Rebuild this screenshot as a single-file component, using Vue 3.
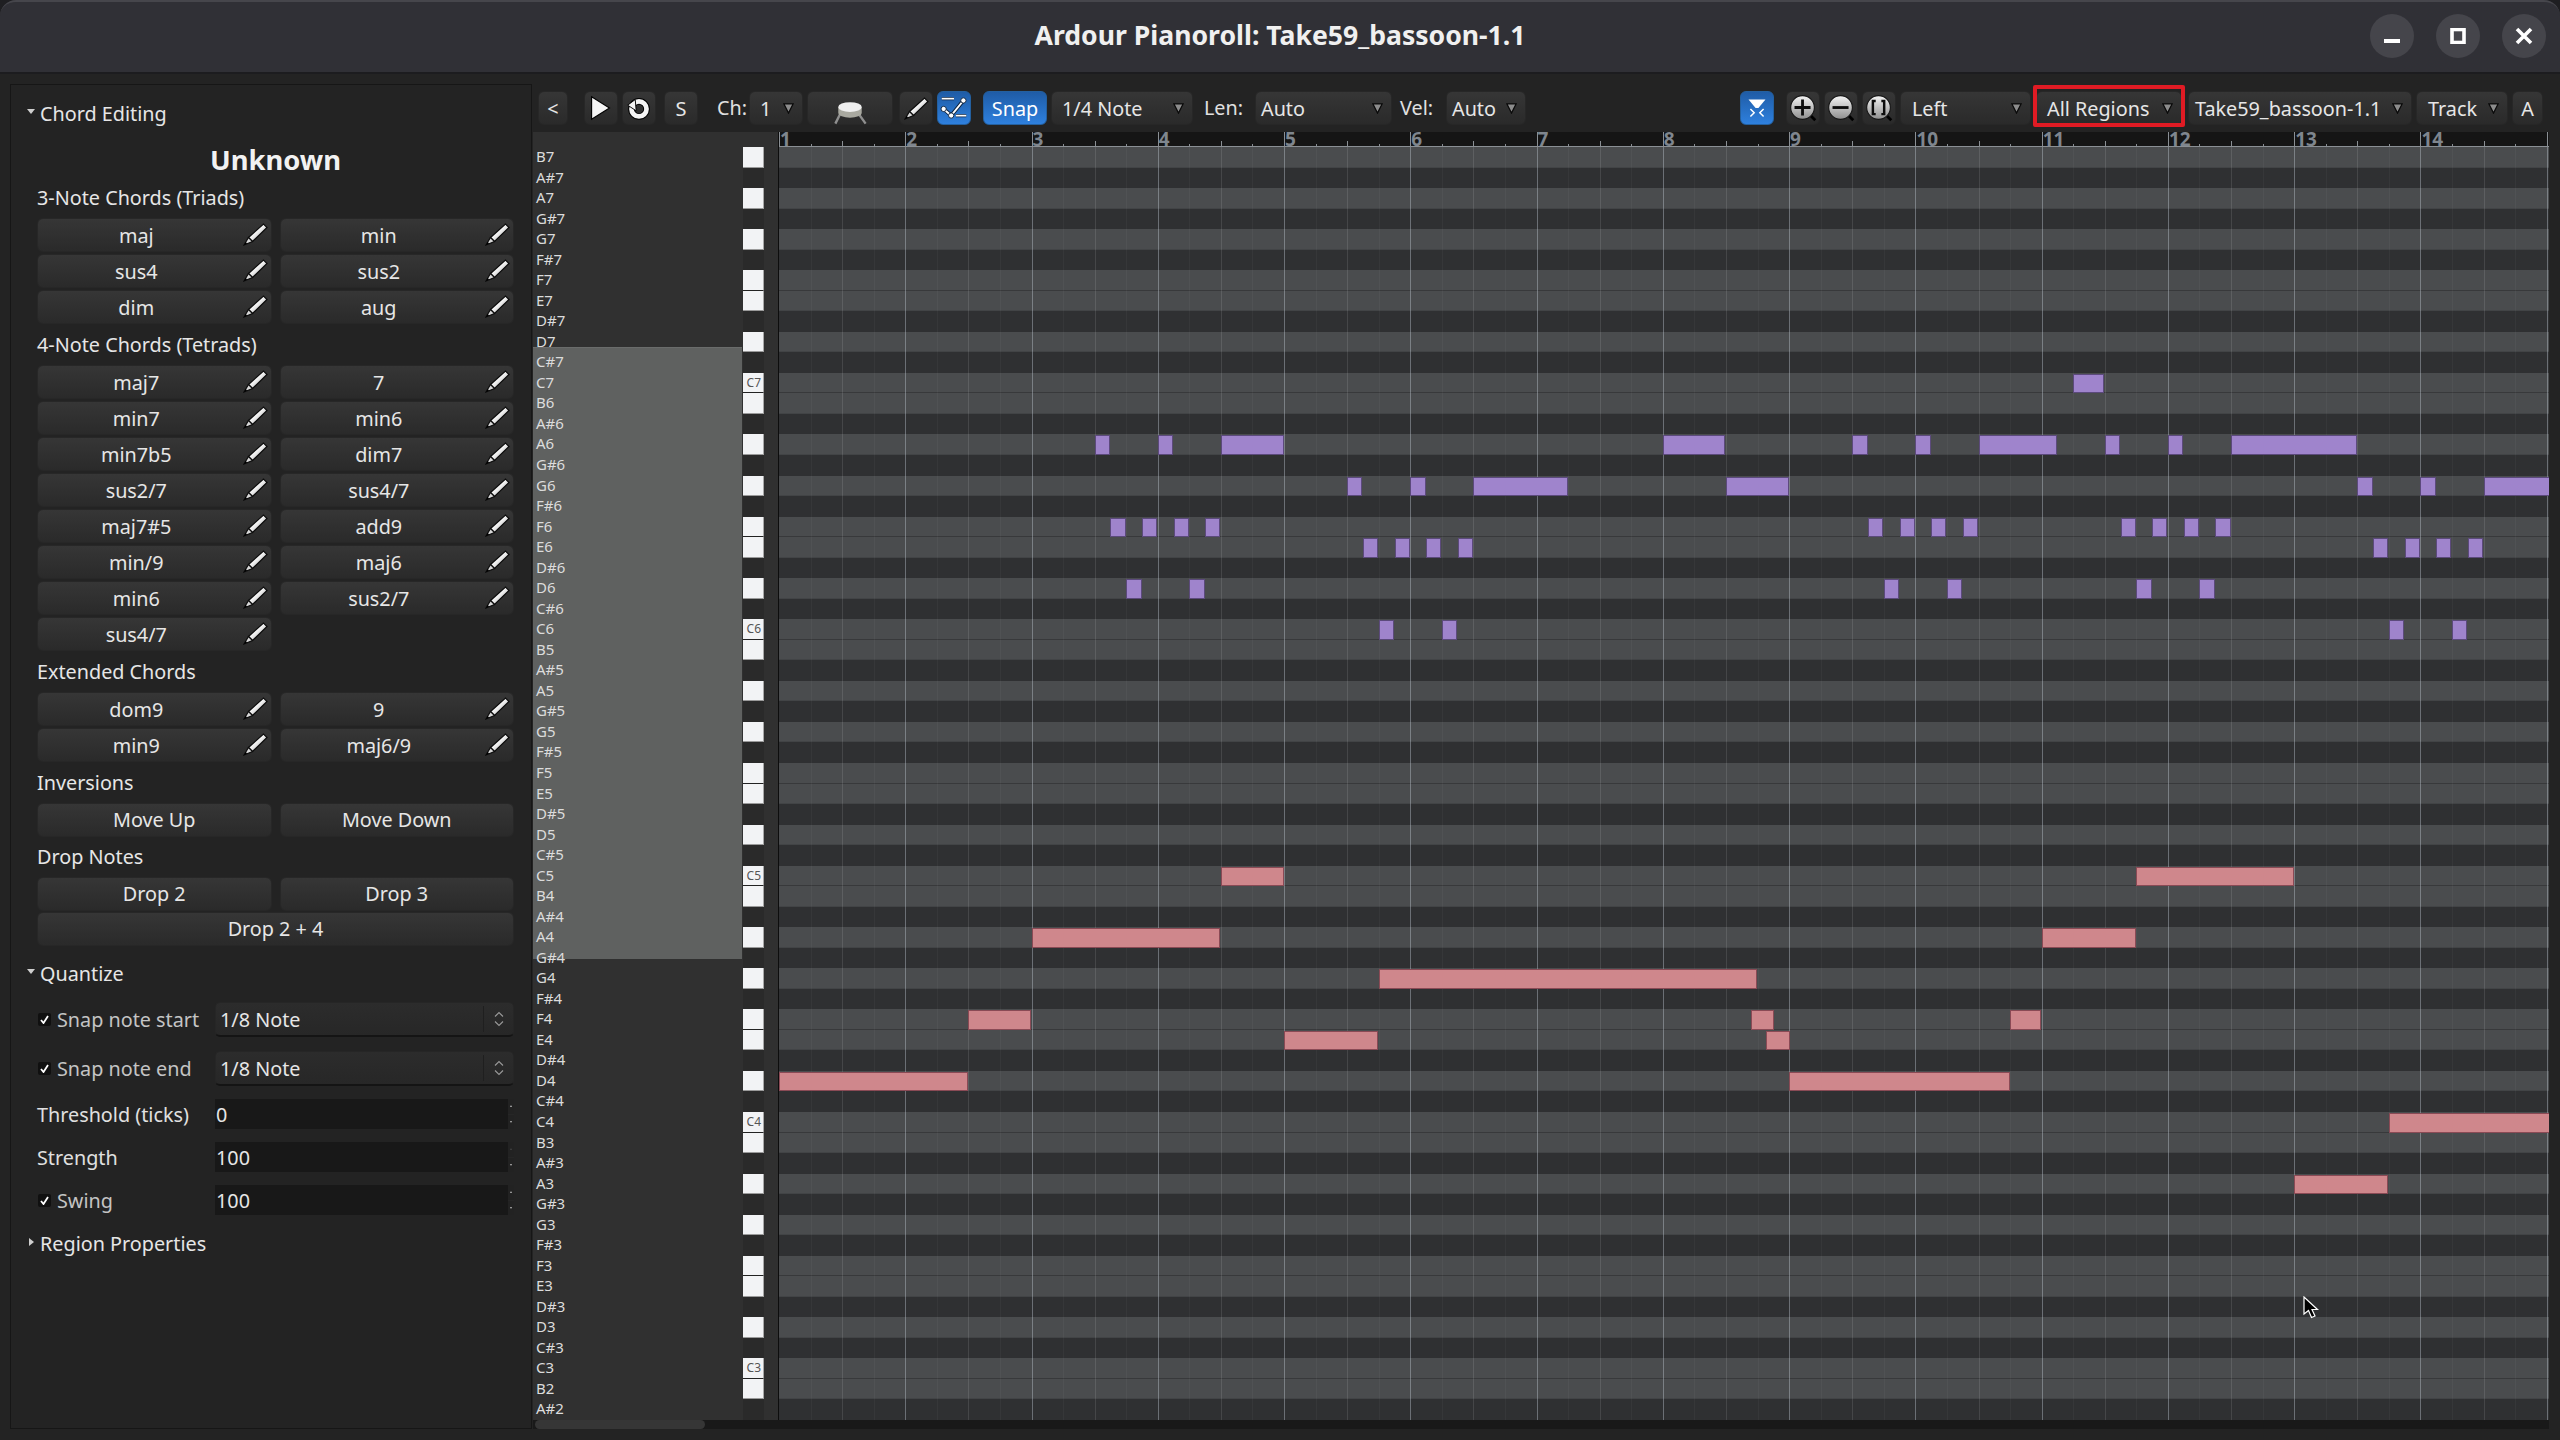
<script setup>
const triads = ['maj', 'min', 'sus4', 'sus2', 'dim', 'aug']
const tetrads = ['maj7', '7', 'min7', 'min6', 'min7b5', 'dim7', 'sus2/7', 'sus4/7', 'maj7#5', 'add9', 'min/9', 'maj6', 'min6', 'sus2/7', 'sus4/7']
const extended = ['dom9', '9', 'min9', 'maj6/9']

const names = ['C', 'C#', 'D', 'D#', 'E', 'F', 'F#', 'G', 'G#', 'A', 'A#', 'B']
const TOP = 107
const ROW = 1273 / 62
const STEP = 15.783

const rows = []
for (let m = TOP; m >= 46; m--) {
  const n = names[m % 12]
  rows.push({
    m,
    name: n + (Math.floor(m / 12) - 1),
    black: n.length > 1,
    pair: n === 'F' || n === 'C',
    isC: n === 'C'
  })
}

const beats = []
for (let i = 1; i < 57; i++) {
  beats.push({ i, kind: i % 4 === 0 ? 'bar' : i % 2 === 0 ? 'half' : 'beat' })
}
const bars = []
for (let b = 0; b < 14; b++) bars.push(b)

// [midi, start in 16ths, length in 16ths]
const purple = [
  [96, 82, 2],
  [93, 20, 1], [93, 24, 1], [93, 28, 4], [93, 56, 4], [93, 68, 1], [93, 72, 1], [93, 76, 5], [93, 84, 1], [93, 88, 1], [93, 92, 8],
  [91, 36, 1], [91, 40, 1], [91, 44, 6], [91, 60, 4], [91, 100, 1], [91, 104, 1], [91, 108, 6],
  [89, 21, 1], [89, 23, 1], [89, 25, 1], [89, 27, 1], [89, 69, 1], [89, 71, 1], [89, 73, 1], [89, 75, 1], [89, 85, 1], [89, 87, 1], [89, 89, 1], [89, 91, 1],
  [88, 37, 1], [88, 39, 1], [88, 41, 1], [88, 43, 1], [88, 101, 1], [88, 103, 1], [88, 105, 1], [88, 107, 1],
  [86, 22, 1], [86, 26, 1], [86, 70, 1], [86, 74, 1], [86, 86, 1], [86, 90, 1],
  [84, 38, 1], [84, 42, 1], [84, 102, 1], [84, 106, 1]
]
const pink = [
  [72, 28, 4], [72, 86, 10],
  [69, 16, 12], [69, 80, 6],
  [67, 38, 24],
  [65, 12, 4], [65, 61.6, 1.45], [65, 78, 2],
  [64, 32, 6], [64, 62.55, 1.55],
  [62, 0, 12], [62, 64, 14],
  [60, 102, 12],
  [57, 96, 6]
]

function noteStyle(n) {
  return {
    left: n[1] * STEP + 'px',
    width: n[2] * STEP - 0.5 + 'px',
    top: (TOP - n[0]) * ROW + 1 + 'px',
    height: ROW - 1 + 'px'
  }
}
</script>

<template>
  <div class="app">
    <svg class="sprites" width="0" height="0">
      <defs>
        <linearGradient id="pen" x1="0" y1="0" x2="1" y2="1">
          <stop offset="0" stop-color="#8c8c8c" />
          <stop offset="0.45" stop-color="#f4f4f4" />
          <stop offset="1" stop-color="#8f8f8f" />
        </linearGradient>
        <linearGradient id="lens" x1="0" y1="0" x2="0" y2="1">
          <stop offset="0" stop-color="#f4f4f4" />
          <stop offset="1" stop-color="#8e8e8e" />
        </linearGradient>
        <symbol id="pencil" viewBox="0 0 25 23">
          <polygon points="5.5,14.5 20.5,1 24,4.5 9.5,18.5" fill="url(#pen)" stroke="#0c0c0c" stroke-width="1.2" />
          <polygon points="1,22 5.5,14.5 9.5,18.5" fill="#d8d8d8" stroke="#0c0c0c" stroke-width="1.2" />
          <polygon points="1,22 2.6,19 4.2,20.6" fill="#000" />
        </symbol>
        <symbol id="caret" viewBox="0 0 12 12">
          <polygon points="1,1 11,1 6,11" fill="#8c8c8c" stroke="#0a0a0a" stroke-width="1.4" />
        </symbol>
        <symbol id="lensbase" viewBox="0 0 34 34">
          <line x1="25" y1="25" x2="30" y2="30" stroke="#000" stroke-width="3" />
          <circle cx="16.5" cy="16.5" r="12.6" fill="url(#lens)" stroke="#161616" stroke-width="1.2" />
        </symbol>
      </defs>
    </svg>

    <header class="titlebar">
      <h1 class="title">Ardour Pianoroll: Take59_bassoon-1.1</h1>
      <div class="wm">
        <button class="wm-btn">
          <svg width="16" height="16" viewBox="0 0 16 16"><rect x="0" y="11" width="16" height="4" fill="#fff" /></svg>
        </button>
        <button class="wm-btn">
          <svg width="16" height="16" viewBox="0 0 16 16"><rect x="2" y="1.5" width="12" height="13" fill="none" stroke="#fff" stroke-width="3.6" /></svg>
        </button>
        <button class="wm-btn">
          <svg width="18" height="18" viewBox="0 0 18 18"><path d="M2 2 L16 16 M16 2 L2 16" stroke="#fff" stroke-width="3.6" /></svg>
        </button>
      </div>
    </header>

    <div class="body">
      <aside class="panel">
        <div class="expander"><span class="tri-down"></span>Chord Editing</div>
        <div class="chord-name">Unknown</div>

        <div class="sect first">3-Note Chords (Triads)</div>
        <div class="btn-grid">
          <button v-for="(c, i) in triads" :key="i" class="btn chord">
            {{ c }}
            <svg class="pencil"><use href="#pencil" /></svg>
          </button>
        </div>

        <div class="sect">4-Note Chords (Tetrads)</div>
        <div class="btn-grid">
          <button v-for="(c, i) in tetrads" :key="i" class="btn chord">
            {{ c }}
            <svg class="pencil"><use href="#pencil" /></svg>
          </button>
        </div>

        <div class="sect">Extended Chords</div>
        <div class="btn-grid">
          <button v-for="(c, i) in extended" :key="i" class="btn chord">
            {{ c }}
            <svg class="pencil"><use href="#pencil" /></svg>
          </button>
        </div>

        <div class="sect">Inversions</div>
        <div class="btn-grid">
          <button class="btn act">Move Up</button>
          <button class="btn act">Move Down</button>
        </div>

        <div class="sect tight">Drop Notes</div>
        <div class="btn-grid drop">
          <button class="btn act">Drop 2</button>
          <button class="btn act">Drop 3</button>
          <button class="btn act wide">Drop 2 + 4</button>
        </div>

        <div class="expander quant"><span class="tri-down"></span>Quantize</div>

        <div class="qrow combo-row">
          <label class="qlabel dim"><span class="check"><svg width="9" height="9" viewBox="0 0 9 9"><path d="M1 5 L3.5 8 L8 1" fill="none" stroke="#fff" stroke-width="1.8" /></svg></span>Snap note start</label>
          <div class="combo">
            <span>1/8 Note</span>
            <span class="updown"><svg width="10" height="16" viewBox="0 0 10 16"><path d="M1 5.5 L5 1.5 L9 5.5 M1 10.5 L5 14.5 L9 10.5" fill="none" stroke="#999" stroke-width="1.1" /></svg></span>
          </div>
        </div>
        <div class="qrow combo-row">
          <label class="qlabel dim"><span class="check"><svg width="9" height="9" viewBox="0 0 9 9"><path d="M1 5 L3.5 8 L8 1" fill="none" stroke="#fff" stroke-width="1.8" /></svg></span>Snap note end</label>
          <div class="combo">
            <span>1/8 Note</span>
            <span class="updown"><svg width="10" height="16" viewBox="0 0 10 16"><path d="M1 5.5 L5 1.5 L9 5.5 M1 10.5 L5 14.5 L9 10.5" fill="none" stroke="#999" stroke-width="1.1" /></svg></span>
          </div>
        </div>
        <div class="qrow spin-row">
          <label class="qlabel">Threshold (ticks)</label>
          <div class="spin"><span>0</span><span class="arrows"><i class="up"></i><i class="dn"></i></span></div>
        </div>
        <div class="qrow spin-row">
          <label class="qlabel">Strength</label>
          <div class="spin"><span>100</span><span class="arrows"><i class="up off"></i><i class="dn"></i></span></div>
        </div>
        <div class="qrow spin-row">
          <label class="qlabel dim"><span class="check"><svg width="9" height="9" viewBox="0 0 9 9"><path d="M1 5 L3.5 8 L8 1" fill="none" stroke="#fff" stroke-width="1.8" /></svg></span>Swing</label>
          <div class="spin"><span>100</span><span class="arrows"><i class="up"></i><i class="dn"></i></span></div>
        </div>

        <div class="expander region"><span class="tri-right"></span>Region Properties</div>
      </aside>

      <main class="main">
        <div class="toolbar">
          <button class="btn tb w30">&lt;</button>
          <button class="btn tb icon ml16">
            <svg width="34" height="34" viewBox="0 0 34 34"><polygon points="7,5 26,17 7,29" fill="#f4f4f4" stroke="#000" stroke-width="1.2" /></svg>
          </button>
          <button class="btn tb icon ml4">
            <svg width="34" height="34" viewBox="0 0 34 34">
              <circle cx="17" cy="18" r="8" fill="none" stroke="#000" stroke-width="7" />
              <circle cx="17" cy="18" r="8" fill="none" stroke="#f4f4f4" stroke-width="5" />
              <polygon points="5,14 13,8 14,20" fill="#f4f4f4" stroke="#000" stroke-width="1" />
            </svg>
          </button>
          <button class="btn tb icon ml8 small">S</button>
          <span class="tlabel ml19 wch">Ch:</span>
          <div class="btn tb dd ml4 w54"><span>1</span><svg class="caret"><use href="#caret" /></svg></div>
          <button class="btn tb icon ml4 w86">
            <svg width="86" height="34" viewBox="0 0 86 34">
              <path d="M28 33 L35 19 M59 33 L49 19" stroke="#8f8f8f" stroke-width="2.4" />
              <path d="M31 16 V22 A12 5 0 0 0 55 22 V16 Z" fill="#a9a9a0" />
              <ellipse cx="43" cy="16" rx="12" ry="5" fill="#efefef" />
            </svg>
          </button>
          <button class="btn tb icon ml6">
            <svg class="pencil-tb"><use href="#pencil" /></svg>
          </button>
          <button class="btn tb icon ml4 blue">
            <svg width="34" height="34" viewBox="0 0 34 34">
              <path d="M6 18 L14 25 L27 9" fill="none" stroke="#0c2340" stroke-width="4" />
              <path d="M4 7 H17 M19 25 H30" stroke="#0c2340" stroke-width="3.4" />
              <path d="M4 7 H17 M19 25 H30" stroke="#fff" stroke-width="1.8" />
              <path d="M6 18 L14 25 L27 9" fill="none" stroke="#fff" stroke-width="2" />
              <circle cx="6" cy="18" r="2.8" fill="#fff" stroke="#0c2340" />
              <circle cx="14" cy="25" r="2.8" fill="#fff" stroke="#0c2340" />
              <circle cx="27" cy="9" r="2.8" fill="#fff" stroke="#0c2340" />
            </svg>
          </button>
          <button class="btn tb blue ml12 w64">Snap</button>
          <div class="btn tb dd ml4 w142"><span>1/4 Note</span><svg class="caret"><use href="#caret" /></svg></div>
          <span class="tlabel ml11 wlen">Len:</span>
          <div class="btn tb dd w137 tight-pad"><span>Auto</span><svg class="caret"><use href="#caret" /></svg></div>
          <span class="tlabel ml8 wvel">Vel:</span>
          <div class="btn tb dd w80 tight-pad"><span>Auto</span><svg class="caret"><use href="#caret" /></svg></div>

          <div class="tb-right">
            <button class="btn tb icon blue">
              <svg width="34" height="34" viewBox="0 0 34 34">
                <path d="M8 8 H26 L18.5 17 H15.5 Z" fill="#fff" />
                <path d="M10 18 L14 22 L10 26 M24 18 L20 22 L24 26" fill="none" stroke="#fff" stroke-width="1.6" />
              </svg>
            </button>
            <button class="btn tb icon ml12">
              <svg width="34" height="34" viewBox="0 0 34 34">
                <use href="#lensbase" />
                <path d="M8 16.5 H25 M16.5 8 V25" stroke="#0c0c0c" stroke-width="3" />
              </svg>
            </button>
            <button class="btn tb icon ml4">
              <svg width="34" height="34" viewBox="0 0 34 34">
                <use href="#lensbase" />
                <path d="M8 16.5 H25" stroke="#0c0c0c" stroke-width="3" />
              </svg>
            </button>
            <button class="btn tb icon ml4">
              <svg width="34" height="34" viewBox="0 0 34 34">
                <use href="#lensbase" />
                <path d="M13.5 9.5 H10.5 V23.5 H13.5 M19.5 9.5 H22.5 V23.5 H19.5" fill="none" stroke="#0c0c0c" stroke-width="2.6" />
              </svg>
            </button>
            <div class="btn tb dd ml4 w131 pl12"><span>Left</span><svg class="caret"><use href="#caret" /></svg></div>
            <div class="btn tb dd marked w146"><span>All Regions</span><svg class="caret"><use href="#caret" /></svg></div>
            <div class="btn tb dd ml6 w224 pl6"><span>Take59_bassoon-1.1</span><svg class="caret"><use href="#caret" /></svg></div>
            <div class="btn tb dd ml4 w92 pl12"><span>Track</span><svg class="caret"><use href="#caret" /></svg></div>
            <button class="btn tb ml4 w31">A</button>
          </div>
        </div>

        <div class="editor">
          <div class="piano">
            <div class="highlight"></div>
            <div class="piano-rows">
              <div v-for="r in rows" :key="r.m" class="proll">
                <span class="pname">{{ r.name }}</span>
                <span class="pkey" :class="{ white: !r.black, pair: r.pair }">
                  <template v-if="r.isC">{{ r.name }}</template>
                </span>
                <span class="pgap"></span>
              </div>
            </div>
          </div>

          <div class="canvas">
            <div class="ruler">
              <template v-for="b in bars" :key="b">
                <span class="bar-no" :style="{ left: b * STEP * 8 + 1 + 'px' }">{{ b + 1 }}</span>
                <span class="tick full" :style="{ left: b * STEP * 8 + 'px' }"></span>
                <span class="tick short" :style="{ left: (b + 0.25) * STEP * 8 + 'px' }"></span>
                <span class="tick mid" :style="{ left: (b + 0.5) * STEP * 8 + 'px' }"></span>
                <span class="tick short" :style="{ left: (b + 0.75) * STEP * 8 + 'px' }"></span>
              </template>
              <span class="tick full" :style="{ left: 14 * STEP * 8 + 'px' }"></span>
            </div>
            <div class="lanes-wrap">
              <div class="lanes">
                <div v-for="r in rows" :key="r.m" class="lane" :class="{ light: !r.black, pair: r.pair }"></div>
              </div>
              <span v-for="b in beats" :key="b.i" class="vline" :class="b.kind" :style="{ left: b.i * STEP * 2 + 'px' }"></span>
              <span v-for="(n, i) in purple" :key="'p' + i" class="note purple" :style="noteStyle(n)"></span>
              <span v-for="(n, i) in pink" :key="'q' + i" class="note pink" :style="noteStyle(n)"></span>
            </div>
          </div>
        </div>

        <div class="hscroll"><div class="thumb"></div></div>
      </main>
    </div>

    <svg class="cursor" width="22" height="24" viewBox="0 0 22 24">
      <path d="M1 1 V18 L5.5 14.5 L8.5 21.5 L12 20 L9 13.5 H14.5 Z" fill="#000" stroke="#fff" stroke-width="1.2" />
    </svg>
  </div>
</template>

<style scoped>
.app {
  position: relative;
  width: 2560px;
  height: 1440px;
  overflow: hidden;
  background: #1f1f22;
  color: #e6e6e6;
  font-family: "Noto Sans", "Open Sans", sans-serif;
  font-size: 19.8px;
}

.sprites {
  position: absolute;
}

button {
  font: inherit;
  color: inherit;
  padding: 0;
}

.titlebar {
  position: relative;
  height: 74px;
  box-sizing: border-box;
  background: #303036;
  border-top: 2px solid #46464c;
  border-bottom: 2px solid #1c1c1f;
  border-radius: 16px 16px 0 0;
  display: flex;
  align-items: center;
  justify-content: center;
  padding-bottom: 4px;
}

.title {
  margin: 0;
  font-size: 26.6px;
  font-weight: 700;
  color: #f0f0f0;
}

.wm {
  position: absolute;
  right: 14px;
  top: 12px;
  display: flex;
  gap: 22px;
}

.wm-btn {
  width: 44px;
  height: 44px;
  border: 0;
  border-radius: 50%;
  background: #45454b;
  display: flex;
  align-items: center;
  justify-content: center;
}

.body {
  display: flex;
  height: 1366px;
  background: #232323;
}

.panel {
  width: 522px;
  height: 1345px;
  margin: 10px 1px 0 10px;
  box-sizing: border-box;
  border: 1px solid #161616;
  padding: 15px 17px 0 26px;
  flex: none;
}

.expander {
  height: 28px;
  line-height: 28px;
  margin-left: -10px;
  display: flex;
  align-items: center;
  gap: 5px;
}

.tri-down {
  width: 0;
  height: 0;
  border-left: 4px solid transparent;
  border-right: 4px solid transparent;
  border-top: 5px solid #cfcfcf;
  margin-bottom: 5px;
}

.tri-right {
  width: 0;
  height: 0;
  border-top: 4px solid transparent;
  border-bottom: 4px solid transparent;
  border-left: 5px solid #cfcfcf;
  margin: 0 6px 4px 2px;
}

.chord-name {
  margin-top: 13px;
  height: 38px;
  line-height: 38px;
  text-align: center;
  font-size: 27.4px;
  font-weight: 700;
  color: #f2f2f2;
}

.sect {
  height: 28px;
  line-height: 28px;
  margin-top: 7px;
  margin-bottom: 6px;
}

.sect.first {
  margin-top: 5px;
}

.sect.tight {
  margin-top: 6px;
}

.btn-grid {
  display: grid;
  grid-template-columns: 1fr 1fr;
  column-gap: 8px;
  row-gap: 2px;
}

.btn-grid.drop {
  row-gap: 1px;
}

.btn {
  position: relative;
  height: 34px;
  box-sizing: border-box;
  border: 1px solid #272727;
  border-radius: 6px;
  background: linear-gradient(#363636, #2a2a2a);
  color: #e6e6e6;
  display: flex;
  align-items: center;
  justify-content: center;
}

.btn.chord {
  padding-right: 36px;
}

.btn.act {
  padding-bottom: 2px;
}

.btn.wide {
  grid-column: 1 / 3;
}

.pencil {
  position: absolute;
  right: 3px;
  top: 4px;
  width: 25px;
  height: 23px;
}

.quant {
  margin-top: 14px;
}

.qrow {
  display: flex;
  align-items: center;
}

.combo-row {
  margin-top: 14px;
  height: 35px;
}

.spin-row {
  margin-top: 13px;
  height: 30px;
}

.qlabel {
  width: 178px;
  flex: none;
  display: flex;
  align-items: center;
  color: #e0e0e0;
}

.qlabel.dim {
  color: #c4c4c4;
}

.check {
  width: 13px;
  height: 13px;
  margin: 0 6px 0 1px;
  background: #101010;
  border-radius: 2px;
  display: flex;
  align-items: center;
  justify-content: center;
}

.combo {
  flex: 1;
  height: 35px;
  box-sizing: border-box;
  display: flex;
  align-items: center;
  justify-content: space-between;
  padding-left: 4px;
  background: linear-gradient(#2c2c2c, #272727);
  border: 1px solid #262626;
  border-bottom: 2px solid #141414;
  border-radius: 5px;
}

.updown {
  width: 30px;
  height: 26px;
  box-sizing: border-box;
  border-left: 1px solid #1f1f1f;
  display: flex;
  align-items: center;
  justify-content: center;
}

.spin {
  flex: 1;
  height: 30px;
  display: flex;
  align-items: center;
  justify-content: space-between;
  padding-left: 1px;
  background: #181818;
  border-radius: 0 4px 4px 0;
}

.arrows {
  width: 6px;
  height: 100%;
  display: flex;
  flex-direction: column;
  gap: 1px;
  background: #262626;
}

.arrows i {
  flex: 1;
  position: relative;
  background: #222;
}

.arrows i::after {
  content: "";
  position: absolute;
  left: 1.5px;
  top: 6px;
  border-left: 1.5px solid transparent;
  border-right: 1.5px solid transparent;
}

.arrows .up::after {
  border-bottom: 2px solid #bbb;
}

.arrows .dn::after {
  border-top: 2px solid #bbb;
}

.arrows .off::after {
  border-bottom-color: #444;
}

.region {
  margin-top: 15px;
  gap: 0;
}

.main {
  flex: 1;
  min-width: 0;
  display: flex;
  flex-direction: column;
}

.toolbar {
  height: 58px;
  box-sizing: border-box;
  padding: 17px 17px 0 5px;
  display: flex;
  align-items: flex-start;
  flex: none;
}

.tb {
  flex: none;
  width: 34px;
}

.tb.small {
  font-size: 20px;
}

.tb.dd {
  justify-content: space-between;
  padding: 0 8px 0 10px;
}

.tb.dd.pl12 {
  padding-left: 11px;
}

.tb.dd.pl6 {
  padding-left: 6px;
}

.tb.tight-pad {
  padding-left: 5px;
}

.tb.blue {
  background: linear-gradient(#1f5ca6, #2e80de);
  border-color: #24609f;
  color: #fff;
}

.w30 { width: 30px; }
.w31 { width: 31px; }
.w54 { width: 54px; }
.w64 { width: 64px; }
.w80 { width: 80px; }
.w86 { width: 86px; }
.w92 { width: 92px; }
.w131 { width: 131px; }
.w137 { width: 137px; }
.w142 { width: 142px; }
.w146 { width: 146px; }
.w224 { width: 224px; }

.ml4 { margin-left: 4px; }
.ml6 { margin-left: 6px; }
.ml8 { margin-left: 8px; }
.ml11 { margin-left: 11px; }
.ml12 { margin-left: 12px; }
.ml16 { margin-left: 16px; }
.ml19 { margin-left: 19px; }

.tlabel {
  flex: none;
  height: 34px;
  line-height: 34px;
  color: #e0e0e0;
  white-space: nowrap;
}

.wch { width: 28px; }
.wlen { width: 51px; }
.wvel { width: 46px; }

.caret {
  width: 11px;
  height: 11px;
  flex: none;
}

.pencil-tb {
  width: 25px;
  height: 23px;
}

.tb-right {
  margin-left: auto;
  display: flex;
  align-items: flex-start;
}

.marked {
  margin-left: 5px;
}

.marked::after {
  content: "";
  position: absolute;
  left: -4px;
  right: -4px;
  top: -7px;
  bottom: -3px;
  border: 4px solid #e01b24;
  border-radius: 2px;
}

.editor {
  display: flex;
  height: 1288px;
  flex: none;
}

.piano {
  position: relative;
  width: 246px;
  flex: none;
  padding-top: 15px;
  box-sizing: border-box;
  background: #303030;
  border-right: 1px solid #0d0d0d;
}

.highlight {
  position: absolute;
  left: 0;
  top: 215px;
  width: 209px;
  height: 612px;
  background: #5f6160;
  border-top: 1px solid #6a6c6b;
  box-sizing: border-box;
}

.piano-rows {
  position: relative;
  display: grid;
  grid-template-rows: repeat(62, 1fr);
  height: 1273px;
}

.proll {
  display: flex;
  min-height: 0;
}

.pname {
  width: 210px;
  flex: none;
  padding-left: 3px;
  box-sizing: border-box;
  font-size: 15px;
  line-height: 19px;
  color: #dcdcdc;
}

.pkey {
  width: 21px;
  flex: none;
  box-sizing: border-box;
  background: #2a2a2a;
  font-size: 12px;
  line-height: 20px;
  text-align: right;
  padding-right: 2px;
  color: #555;
}

.pkey.white {
  background: #f2f3f5;
  border-right: 1px solid #a8a8a8;
  border-bottom: 1px solid #9a9a9a;
}

.pkey.pair {
  border-bottom-color: #222;
}

.pgap {
  flex: 1;
}

.canvas {
  flex: 1;
  min-width: 0;
  margin-right: 11px;
  display: flex;
  flex-direction: column;
}

.ruler {
  position: relative;
  height: 15px;
  flex: none;
  box-sizing: border-box;
  background: #151515;
  border-bottom: 1px solid #8a8f94;
}

.bar-no {
  position: absolute;
  top: 0;
  font-size: 19px;
  font-weight: 700;
  line-height: 14px;
  color: #7f868e;
}

.tick {
  position: absolute;
  bottom: 0;
  width: 1px;
  background: #8a8f94;
}

.tick.full { height: 14px; }
.tick.mid { height: 5px; }
.tick.short { height: 2px; }

.lanes-wrap {
  position: relative;
  height: 1273px;
  overflow: hidden;
  background: #2f3032;
}

.lanes {
  display: grid;
  grid-template-rows: repeat(62, 1fr);
  height: 100%;
}

.lane {
  min-height: 0;
  box-sizing: border-box;
  background: #2f3032;
}

.lane.light {
  background: #4a4c4e;
  border-bottom: 1px solid #424446;
}

.lane.pair {
  border-bottom: 1px solid #38393b;
}

.vline {
  position: absolute;
  top: 0;
  bottom: 0;
  width: 1px;
}

.vline.bar { background: rgba(190, 200, 210, 0.42); }
.vline.half { background: rgba(255, 255, 255, 0.11); }
.vline.beat { background: rgba(255, 255, 255, 0.035); }

.note {
  position: absolute;
  box-sizing: border-box;
  border: 1px solid;
}

.note.purple {
  background: #9f84cc;
  border-color: #5c4a7c;
}

.note.pink {
  background: #cf878c;
  border-color: #8a4a55;
}

.hscroll {
  height: 9px;
  margin: 0 11px 0 0;
  background: #191919;
  flex: none;
}

.thumb {
  width: 170px;
  height: 9px;
  margin-left: 2px;
  border-radius: 5px;
  background: #363636;
}

.cursor {
  position: absolute;
  left: 2303px;
  top: 1296px;
}
</style>

<style>
body {
  margin: 0;
  background: #141416;
}
</style>
